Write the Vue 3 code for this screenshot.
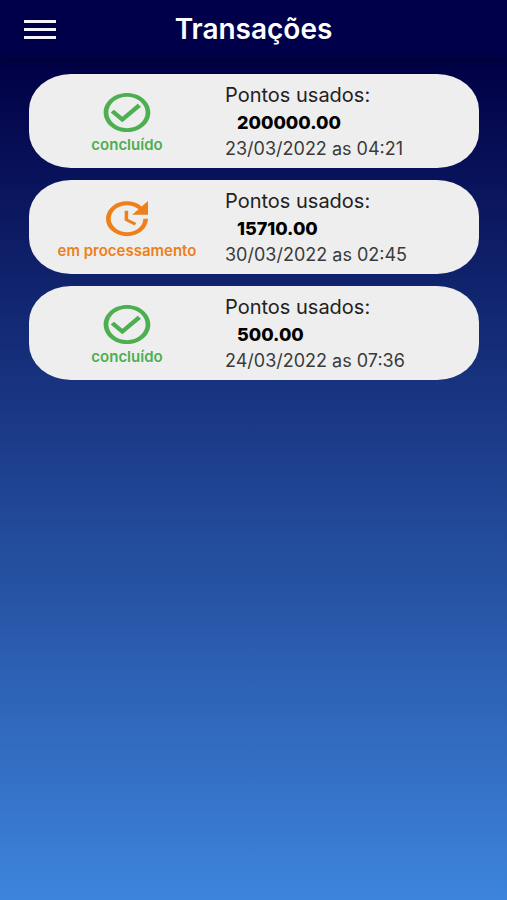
<template>
  <div class="page">
    <header class="topbar">
      <button class="menu-btn" type="button" aria-label="Menu">
        <span class="menu-line"></span>
        <span class="menu-line"></span>
        <span class="menu-line"></span>
      </button>
      <h1 class="title">Transações</h1>
    </header>

    <main>
      <ul class="list">
        <li v-for="item in transactions" :key="item.id" class="card">
          <div class="status" :class="item.status">
            <svg class="status-icon" viewBox="0 0 24 24" preserveAspectRatio="none" aria-hidden="true">
              <path :d="statusInfo[item.status].icon" />
            </svg>
            <span class="status-label">{{ statusInfo[item.status].label }}</span>
          </div>
          <div class="info">
            <span class="info-label">Pontos usados:</span>
            <strong class="info-points">{{ item.points }}</strong>
            <span class="info-date">{{ item.date }} as {{ item.time }}</span>
          </div>
        </li>
      </ul>
    </main>
  </div>
</template>

<script setup>
import { ref } from 'vue'

const statusInfo = {
  done: {
    label: 'concluído',
    icon: 'M16.59 7.58L10 14.17l-3.59-3.58L5 12l5 5 8-8zM12 2C6.48 2 2 6.48 2 12s4.48 10 10 10 10-4.48 10-10S17.52 2 12 2zm0 18c-4.42 0-8-3.58-8-8s3.58-8 8-8 8 3.58 8 8-3.58 8-8 8z'
  },
  pending: {
    label: 'em processamento',
    icon: 'M21 10.12h-6.78l2.74-2.82c-2.73-2.7-7.15-2.8-9.88-.1-2.73 2.71-2.73 7.08 0 9.79s7.15 2.71 9.88 0C18.32 15.65 19 14.08 19 12.1h2c0 1.98-.88 4.55-2.64 6.29-3.51 3.48-9.21 3.48-12.72 0-3.5-3.47-3.53-9.11-.02-12.58s9.14-3.47 12.65 0L21 3v7.12zM12.5 8v4.25l3.5 2.08-.72 1.21L11 13V8h1.5z'
  }
}

const transactions = ref([
  { id: 1, status: 'done', points: '200000.00', date: '23/03/2022', time: '04:21' },
  { id: 2, status: 'pending', points: '15710.00', date: '30/03/2022', time: '02:45' },
  { id: 3, status: 'done', points: '500.00', date: '24/03/2022', time: '07:36' }
])
</script>

<style>
body {
  margin: 0;
}
</style>

<style scoped>
.page {
  display: flex;
  flex-direction: column;
  min-height: 100vh;
  background: linear-gradient(#000045 60px, #3d84dc);
  font-family: Inter, 'Open Sans', sans-serif;
}

.topbar {
  display: grid;
  grid-template-columns: 32px 1fr 32px;
  align-items: center;
  height: 58px;
  padding: 0 24px;
  background: #00004a;
  box-shadow: 0 2px 6px rgba(0, 0, 30, 0.5);
}

.menu-btn {
  display: flex;
  flex-direction: column;
  gap: 5px;
  padding: 0;
  border: 0;
  background: none;
  cursor: pointer;
}

.menu-line {
  width: 32px;
  height: 3px;
  background: #f4f4fa;
}

.title {
  margin: 0;
  text-align: center;
  color: #fff;
  font-size: 28px;
  font-weight: 600;
  line-height: 32px;
}

.list {
  display: flex;
  flex-direction: column;
  gap: 12px;
  margin: 0;
  padding: 16px 28px 16px 29px;
  list-style: none;
}

.card {
  display: grid;
  grid-template-columns: 196px 1fr;
  align-items: center;
  height: 94px;
  border-radius: 42px / 36px;
  background: #eee;
}

.status {
  display: flex;
  flex-direction: column;
  align-items: center;
}

.status.done {
  color: #4caf50;
}

.status.pending {
  color: #ee7f1a;
}

.status-icon {
  width: 56px;
  height: 47px;
  fill: currentColor;
}

.status-label {
  font-size: 15px;
  font-weight: 600;
  line-height: 18px;
}

.info {
  display: flex;
  flex-direction: column;
}

.info-label {
  color: #222;
  font-size: 20px;
  line-height: 30px;
}

.info-points {
  padding-left: 12px;
  color: #000;
  font-size: 18px;
  font-weight: 800;
  line-height: 26px;
}

.info-date {
  color: #3a3a3a;
  font-size: 18px;
  line-height: 26px;
}
</style>
